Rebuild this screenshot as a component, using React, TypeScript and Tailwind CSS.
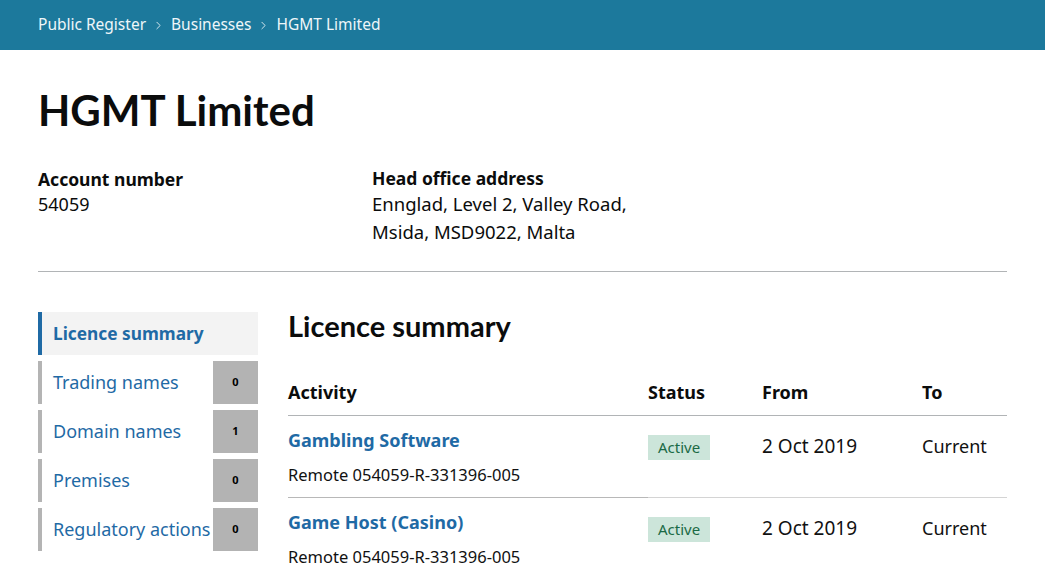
import React from "react";
import { ChevronRight } from "lucide-react";

const body = { fontFamily: '"Noto Sans", "Open Sans", sans-serif' };

function SideItem({ label, count, active }: { label: string; count?: number; active?: boolean }) {
  if (active) {
    return (
      <div className="flex h-[43px] items-center border-l-[4px] border-[#1f6aa5] bg-[#f3f3f3] pl-[11px] text-[17.3px] font-bold text-[#1f6aa5]">
        {label}
      </div>
    );
  }
  return (
    <div className="flex h-[43px] items-stretch border-l-[4px] border-[#b4b4b4]">
      <div className="flex flex-1 items-center pl-[11px] text-[18px] text-[#1f6aa5] whitespace-nowrap">{label}</div>
      <div className="flex w-[45px] items-center justify-center bg-[#b3b3b3] text-[11px] font-bold text-black">{count}</div>
    </div>
  );
}

function Row({ title, sub, divider }: { title: string; sub: string; divider?: boolean }) {
  return (
    <div className="grid h-[82px] grid-cols-[360px_114px_160px_1fr]">
      <div className={`pt-[12px] ${divider ? "border-b border-[#b8b8b8]" : ""}`}>
        <div className="text-[18px] font-bold leading-[24px] text-[#1f6aa5]">{title}</div>
        <div className="mt-[13px] text-[16.5px] leading-[20px] text-[#111]">{sub}</div>
      </div>
      <div className={`pt-[19px] ${divider ? "border-b border-[#d4d4d4]" : ""}`}>
        <span className="inline-block bg-[#cce5da] px-[10px] py-[3px] text-[15px] leading-[19px] text-[#1a6a45]">Active</span>
      </div>
      <div className={`pt-[18px] text-[19px] leading-[24px] text-[#111] ${divider ? "border-b border-[#d4d4d4]" : ""}`}>2 Oct 2019</div>
      <div className={`pt-[18px] text-[18px] leading-[24px] text-[#111] ${divider ? "border-b border-[#d4d4d4]" : ""}`}>Current</div>
    </div>
  );
}

export default function App() {
  return (
    <div className="min-h-[569px] w-full bg-white" style={body}>
      <div className="flex h-[50px] items-center bg-[#1c799c] px-[38px] text-[15.5px] text-[#eef6f9]">
        <span>Public Register</span>
        <ChevronRight size={13} strokeWidth={1.6} className="mx-[6px]" />
        <span>Businesses</span>
        <ChevronRight size={13} strokeWidth={1.6} className="mx-[6px]" />
        <span>HGMT Limited</span>
      </div>
      <div className="px-[38px]">
        <h1 className="mt-[34px] text-[42px] font-bold leading-[52px] text-[#0b0c0c]" style={{ fontFamily: '"Lato", sans-serif' }}>
          HGMT Limited
        </h1>
        <div className="flex pt-[30px] text-[#0b0c0c]">
          <div className="w-[334px]">
            <div className="text-[17.5px] font-bold leading-[26px]">Account number</div>
            <div className="text-[18px] leading-[24px]">54059</div>
          </div>
          <div>
            <div className="text-[17.5px] font-bold leading-[24px]">Head office address</div>
            <div className="text-[18.5px] leading-[28px]">Ennglad, Level 2, Valley Road,</div>
            <div className="text-[18.5px] leading-[28px]">Msida, MSD9022, Malta</div>
          </div>
        </div>
        <div className="mt-[25px] h-px w-[969px] bg-[#b1b4b6]" />
        <div className="mt-[40px] flex">
          <div className="flex w-[220px] flex-col gap-[6px]">
            <SideItem label="Licence summary" active />
            <SideItem label="Trading names" count={0} />
            <SideItem label="Domain names" count={1} />
            <SideItem label="Premises" count={0} />
            <SideItem label="Regulatory actions" count={0} />
          </div>
          <div className="ml-[30px] w-[719px]">
            <h2 className="-mt-[2px] text-[29px] font-bold leading-[32px] text-[#0b0c0c]" style={{ fontFamily: '"Lato", sans-serif' }}>
              Licence summary
            </h2>
            <div className="mt-[27px] grid h-[47px] grid-cols-[360px_114px_160px_1fr] items-center border-b border-[#b1b4b6] text-[18px] font-bold text-[#0b0c0c]">
              <div>Activity</div>
              <div>Status</div>
              <div>From</div>
              <div>To</div>
            </div>
            <Row title="Gambling Software" sub="Remote 054059-R-331396-005" divider />
            <Row title="Game Host (Casino)" sub="Remote 054059-R-331396-005" />
          </div>
        </div>
      </div>
    </div>
  );
}
